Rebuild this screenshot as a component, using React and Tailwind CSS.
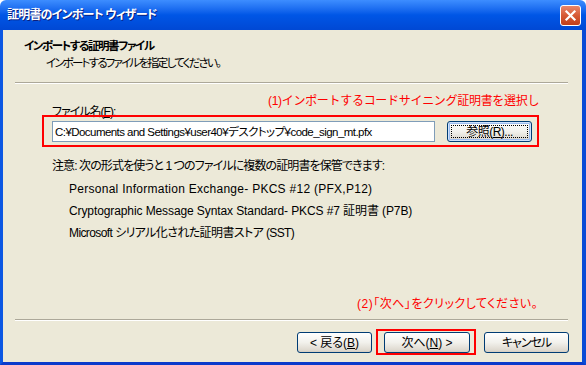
import React from "react";

function Btn({ children, className = "", def = false }) {
  return (
    <div
      className={
        "relative h-[21px] flex items-center justify-center rounded-[3px] border border-[#003C74] bg-linear-to-b from-[#FFFFFF] via-[#F2F1EC] to-[#D9D3C8] text-black " +
        (def ? "shadow-[inset_0_0_0_1px_#CEE2FC,inset_0_0_0_2px_#9DBDF0] " : "shadow-[inset_0_-1px_0_#D6D0C5] ") +
        className
      }
    >
      {def && <span className="absolute left-[3px] right-[3px] top-[3px] bottom-[3px] border border-dotted border-black" />}
      <span className="relative leading-[14px] whitespace-nowrap">{children}</span>
    </div>
  );
}

function Sep() {
  return (
    <div className="ml-[12px] mr-[14px] h-[2px] flex flex-col">
      <div className="h-px bg-[#ACA899]" />
      <div className="h-px bg-white" />
    </div>
  );
}

export default function App() {
  return (
    <div className="relative w-[586px] h-[365px] flex flex-col overflow-hidden font-['Liberation_Sans','Noto_Sans_CJK_JP',sans-serif] [font-feature-settings:'palt'] text-[12px] leading-[14px] text-black">
      {/* Title bar */}
      <div className="h-[30px] shrink-0 flex items-center pl-[7px] pr-[5px] bg-linear-to-b from-[#3D8DFF] via-[#0056E6] to-[#0048D4] rounded-t-[6px]">
        <span className="text-white font-bold text-[12px] tracking-[-0.8px] whitespace-nowrap [text-shadow:1px_1px_0_#0A1E7E]">
          証明書のインポート ウィザード
        </span>
        <div className="ml-auto w-[21px] h-[21px] rounded-[3px] border border-white bg-linear-to-b from-[#E9866A] via-[#D65A35] to-[#C23E19] flex items-center justify-center">
          <svg width="13" height="13" viewBox="0 0 13 13">
            <path d="M2.5 2.5 L10.5 10.5 M10.5 2.5 L2.5 10.5" stroke="white" strokeWidth="2.2" strokeLinecap="square" />
          </svg>
        </div>
      </div>

      {/* Body */}
      <div className="flex-1 flex flex-col bg-[#ECE9D8] border-l-[3px] border-r-[4px] border-b-[3px] border-l-[#0B57E3] border-r-[#0A4BD6] border-b-[#0A3ACB]">
        <div className="pl-[21px] pt-[9px] font-bold text-[11.5px] tracking-[-1.4px] whitespace-nowrap">インポートする証明書ファイル</div>
        <div className="pl-[43px] mt-[3px] text-[11.5px] tracking-[-1.8px] whitespace-nowrap">インポートするファイルを指定してください。</div>
        <div className="mt-[12px]">
          <Sep />
        </div>

        <div className="pl-[49px] mt-[21px]">
          <div className="tracking-[-1px] whitespace-nowrap">
            ファイル名(<span className="underline">F</span>):
          </div>
          <div className="mt-[2px] flex items-center">
            <div className="w-[383px] h-[21px] bg-white border border-[#7F9DB9] flex items-center pl-[2px] whitespace-nowrap overflow-hidden text-[11.5px] tracking-[-0.55px]">
              C:¥Documents and Settings¥user40¥デスクトップ¥code_sign_mt.pfx
            </div>
            <Btn def className="ml-[12px] w-[85px] h-[20px]">
              <span className="tracking-[-0.5px]">
                参照(<span className="underline">R</span>)...
              </span>
            </Btn>
          </div>
          <div className="mt-[17px] tracking-[-0.9px] whitespace-nowrap">注意: 次の形式を使うと 1 つのファイルに複数の証明書を保管できます:</div>
          <div className="pl-[17px] mt-[5px] leading-[22px] whitespace-nowrap">
            <div className="tracking-[0.27px]">Personal Information Exchange- PKCS #12 (PFX,P12)</div>
            <div className="tracking-[-0.1px]">Cryptographic Message Syntax Standard- PKCS #7 証明書 (P7B)</div>
            <div className="tracking-[-0.6px]">Microsoft シリアル化された証明書ストア (SST)</div>
          </div>
        </div>

        <div className="flex-1" />
        <div className="pl-[354px] mb-[8px] text-[#FF0000] tracking-[0.5px] whitespace-nowrap">(2)「次へ」をクリックしてください。</div>
        <Sep />
        <div className="mt-[11px] mb-[9px] pr-[13px] flex justify-end">
          <Btn className="w-[75px]">
            &lt; 戻る(<span className="underline">B</span>)
          </Btn>
          <Btn className="ml-[12px] w-[86px]">
            次へ(<span className="underline">N</span>) &gt;
          </Btn>
          <Btn className="ml-[14px] w-[85px]">
            <span className="tracking-[-1px]">キャンセル</span>
          </Btn>
        </div>
      </div>

      {/* Annotations */}
      <div className="absolute left-[268px] top-[94px] text-[#FF0000] [font-feature-settings:normal] tracking-[-0.3px] whitespace-nowrap">
        (1)インポートするコードサイニング証明書を選択し
      </div>
      <div className="absolute left-[42px] top-[115px] w-[497px] h-[32px] border-2 border-[#FF0000]" />
      <div className="absolute left-[376px] top-[329px] w-[100px] h-[26px] border-2 border-[#FF0000]" />
    </div>
  );
}
